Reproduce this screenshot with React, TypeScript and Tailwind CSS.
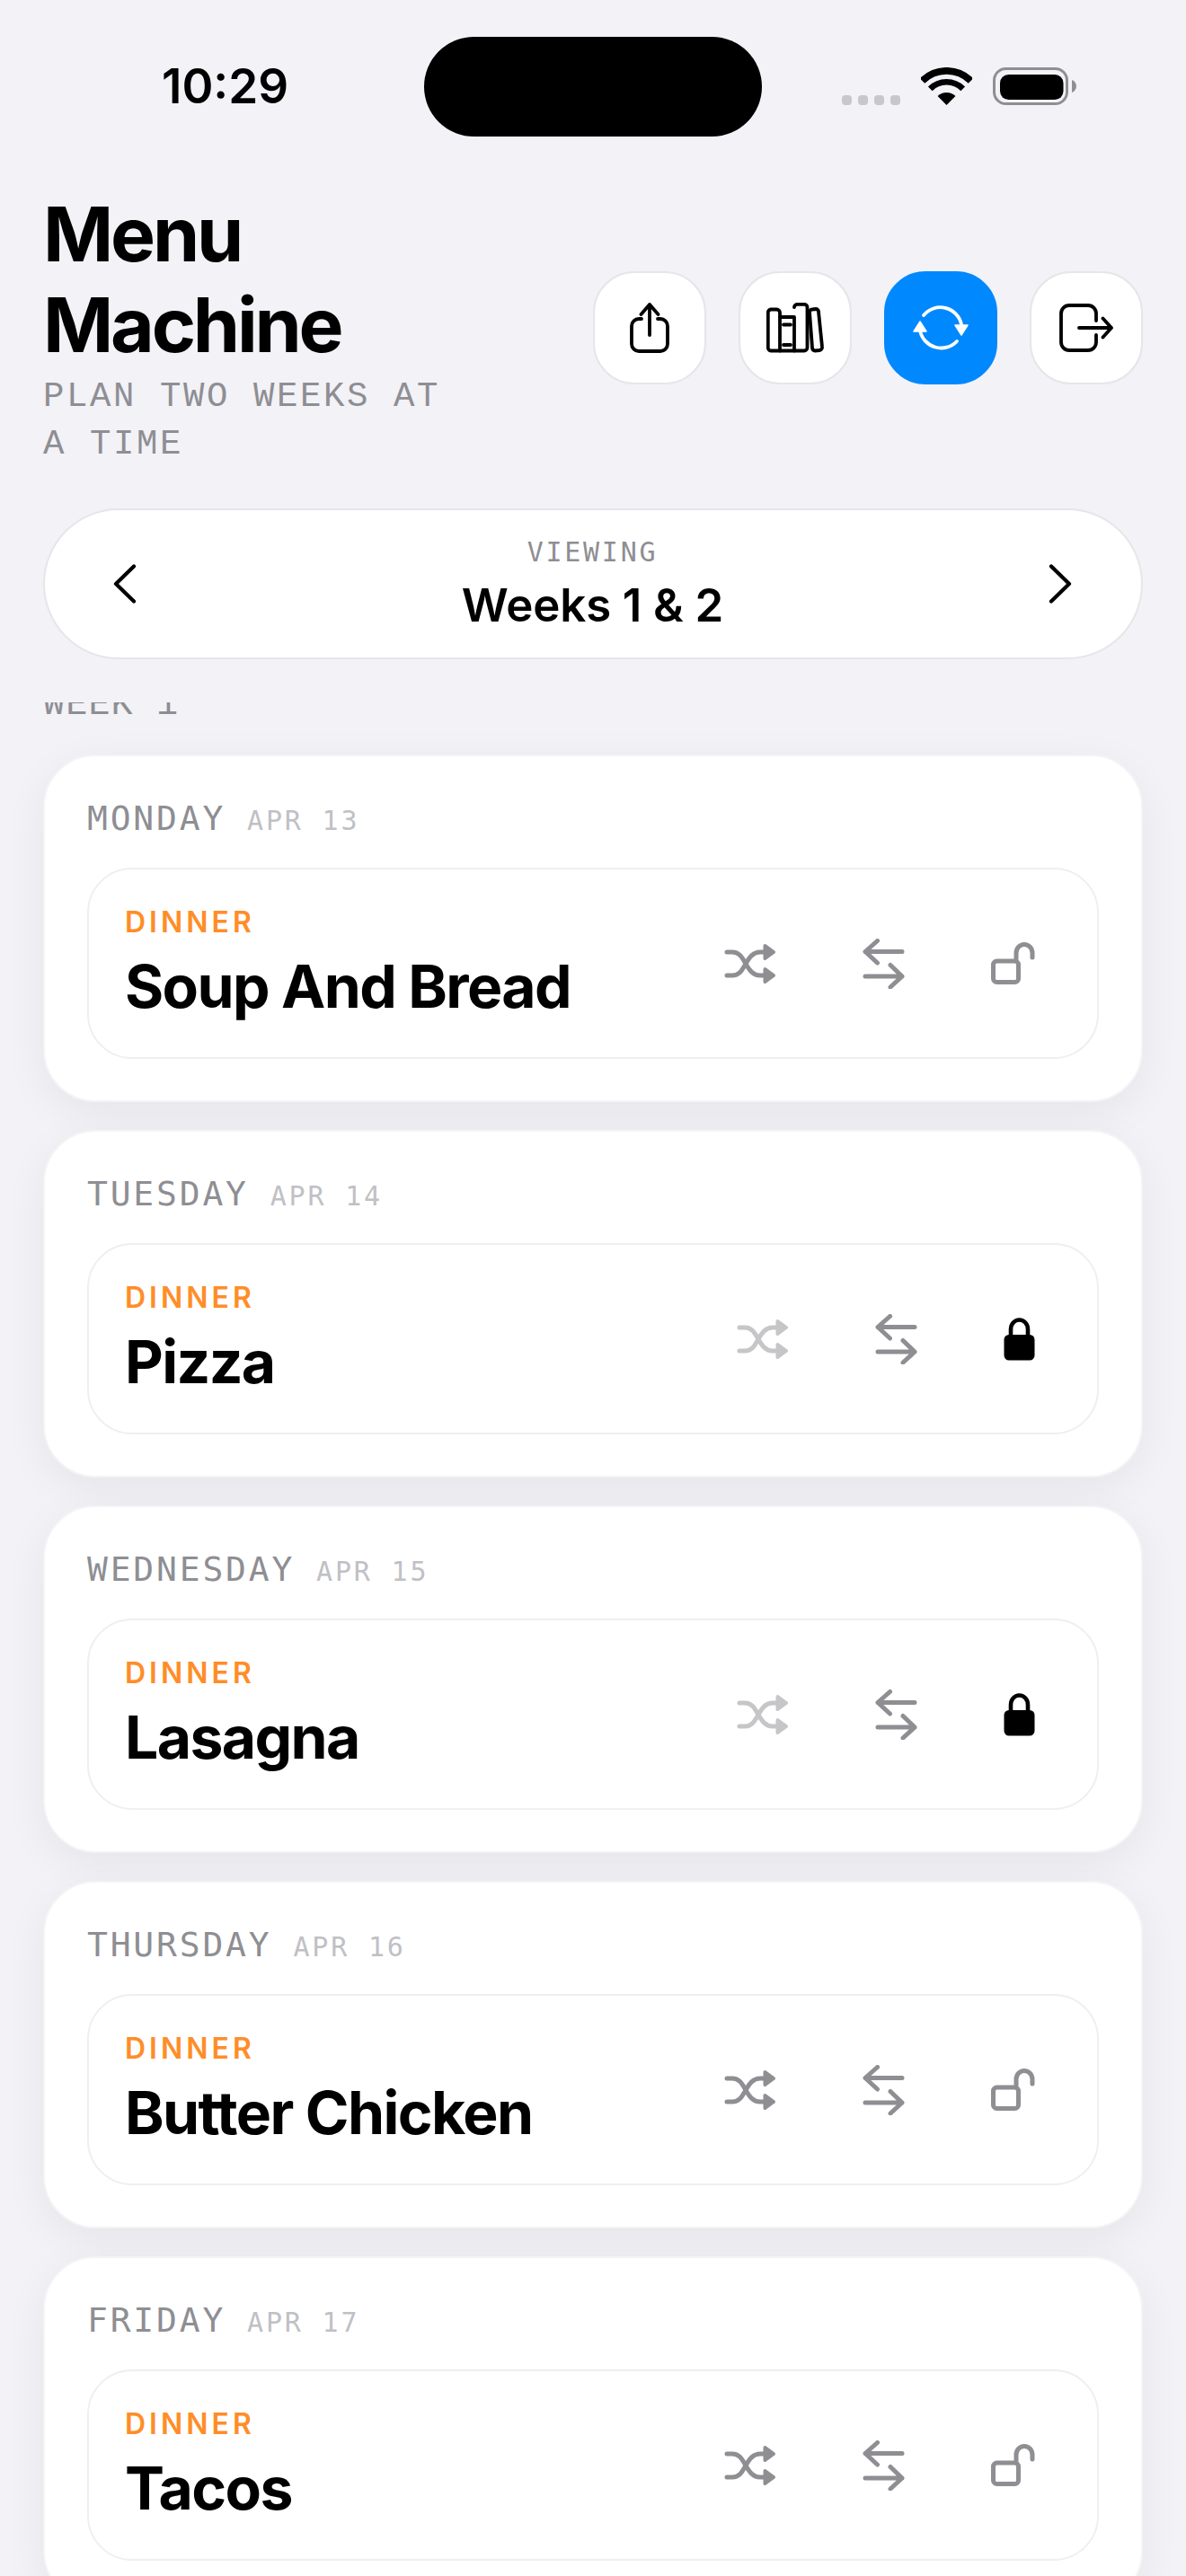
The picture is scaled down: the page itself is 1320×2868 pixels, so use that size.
import React from "react";

const SANS = "font-['Inter','Liberation_Sans',sans-serif]";
const MONO = "font-['Liberation_Mono','DejaVu_Sans_Mono',monospace]";
const MONO_HEAVY = "font-['DejaVu_Sans_Mono','Liberation_Mono',monospace]";

function Wifi() {
  return (
    <svg width="57" height="42" viewBox="0 0 57 42" className="block">
      <path d="M1.500 15 A38.200 38.200 0 0 1 55.500 15" fill="none" stroke="#000" strokeWidth="7.700" />
      <path d="M10.300 23.800 A25.700 25.700 0 0 1 46.700 23.800" fill="none" stroke="#000" strokeWidth="6.600" />
      <path d="M28.500 42 L18.600 32.100 A14 14 0 0 1 38.400 32.100 Z" fill="#000" />
    </svg>
  );
}

function Battery() {
  return (
    <svg width="93" height="42" viewBox="0 0 93 42" className="block">
      <rect x="1.500" y="1.500" width="81" height="39" rx="13" fill="none" stroke="#8e8e93" strokeWidth="3" />
      <rect x="8" y="8" width="70.500" height="28" rx="9.500" fill="#000" />
      <path d="M88 14 C91 15 93 18 93 21 C93 24 91 27 88 28 Z" fill="#8e8e93" />
    </svg>
  );
}

function ShareIcon() {
  return (
    <svg width="44" height="56" viewBox="0 0 44 56" fill="none" stroke="#000" strokeWidth="3.800" strokeLinecap="round" strokeLinejoin="round">
      <path d="M13 18 H10 A8 8 0 0 0 2 26 V46 A8 8 0 0 0 10 54 H34 A8 8 0 0 0 42 46 V26 A8 8 0 0 0 34 18 H31" />
      <path d="M22 36 V2 M12.500 13 L22 2 L31.500 13" />
    </svg>
  );
}

function BooksIcon() {
  return (
    <svg width="64" height="56" viewBox="0 0 64 56" fill="none" stroke="#000" strokeWidth="3.800" strokeLinecap="round" strokeLinejoin="round">
      <path d="M15 53.500 H5 A3.500 3.500 0 0 1 1.800 50 V11 A3.500 3.500 0 0 1 5 7.500 H11.500 A3.500 3.500 0 0 1 15 11 Z" />
      <path d="M15 16 H31 V53.500 H15" />
      <path d="M31 5 A3.500 3.500 0 0 1 34.500 1.800 H42 A3.500 3.500 0 0 1 45.500 5 V50 A3.500 3.500 0 0 1 42 53.500 H31" />
      <path d="M48 10.500 A3 3 0 0 1 51 7.500 L55 7 A3 3 0 0 1 58 10 L62 49 A3.500 3.500 0 0 1 59 53 L54 53.500 A3.500 3.500 0 0 1 51 50 Z" />
      <path d="M19 24.500 H27 M19 47 H27" />
    </svg>
  );
}

function RefreshIcon() {
  return (
    <svg width="62" height="52" viewBox="0 0 62 52" fill="none">
      <path d="M12 12 A24 24 0 0 1 54 22" stroke="#fff" strokeWidth="3.800" strokeLinecap="round" />
      <path d="M49 41 A24 24 0 0 1 8 29" stroke="#fff" strokeWidth="3.800" strokeLinecap="round" />
      <path d="M47 23 H61 L54 34 Z" fill="#fff" stroke="#fff" strokeWidth="1.500" strokeLinejoin="round" />
      <path d="M1 30 H15 L8 19 Z" fill="#fff" stroke="#fff" strokeWidth="1.500" strokeLinejoin="round" />
    </svg>
  );
}

function ExitIcon() {
  return (
    <svg width="60" height="54" viewBox="0 0 60 54" fill="none" stroke="#000" strokeWidth="3.800" strokeLinecap="round" strokeLinejoin="round">
      <path d="M41 19 V11 A9 9 0 0 0 32 2 H11 A9 9 0 0 0 2 11 V43 A9 9 0 0 0 11 52 H32 A9 9 0 0 0 41 43 V35" />
      <path d="M22 27 H58 M48.500 16.500 L58 27 L48.500 37.500" />
    </svg>
  );
}

function Chevron({ flip }: { flip?: boolean }) {
  return (
    <svg width="26" height="44" viewBox="0 0 26 44" fill="none" stroke="#000" strokeWidth="4.200" strokeLinecap="round" strokeLinejoin="round" className={flip ? "-scale-x-100" : ""}>
      <path d="M3 2.500 L23 22 L3 41.500" />
    </svg>
  );
}

function ShuffleIcon({ faded }: { faded?: boolean }) {
  return (
    <svg width="58" height="46" viewBox="0 0 58 46" fill="none" stroke="#8e8e93" strokeWidth="5" strokeLinecap="round" strokeLinejoin="round" className={faded ? "opacity-50" : ""}>
      <path d="M3 10 H9 C17 10 20 16 24 23 C28 30 32 36 40 36 H46" />
      <path d="M3 36 H9 C17 36 20 30 24 23 C28 16 32 10 40 10 H46" />
      <path d="M45.500 3 L55 10 L45.500 17 Z" fill="#8e8e93" strokeWidth="4" />
      <path d="M45.500 29 L55 36 L45.500 43 Z" fill="#8e8e93" strokeWidth="4" />
    </svg>
  );
}

function SwapIcon() {
  return (
    <svg width="47" height="56" viewBox="0 0 47 56" fill="none" stroke="#8e8e93" strokeWidth="5" strokeLinecap="round" strokeLinejoin="round">
      <path d="M44 14.500 H3 M16.500 2.500 L3 14.500 L16.500 27" />
      <path d="M3 42 H44 M31 29.500 L44 42 L31 54" />
    </svg>
  );
}

function LockOpenIcon() {
  return (
    <svg width="49" height="47" viewBox="0 0 49 47" fill="none" stroke="#8e8e93" strokeWidth="5" strokeLinecap="round" strokeLinejoin="round">
      <rect x="2.500" y="21" width="28" height="23.500" rx="4" />
      <path d="M28 19 V12 A9 9.500 0 0 1 46 12 V17" />
    </svg>
  );
}

function LockIcon() {
  return (
    <svg width="35" height="48" viewBox="0 0 35 48">
      <path d="M8 22 V13 A9.500 10.500 0 0 1 27 13 V22" fill="none" stroke="#000" strokeWidth="4.600" />
      <rect x="0.500" y="19" width="34" height="28.500" rx="5.500" fill="#000" />
    </svg>
  );
}

function HeaderButton({ active, children }: { active?: boolean; children: React.ReactNode }) {
  return (
    <div className={`flex h-[126px] w-[126px] items-center justify-center rounded-[46px] border-2 ${active ? "border-[#0088ff] bg-[#0088ff]" : "border-[#e6e6ea] bg-white"}`}>
      {children}
    </div>
  );
}

const days = [
  { day: "MONDAY", date: "APR 13", meal: "Soup And Bread", locked: false },
  { day: "TUESDAY", date: "APR 14", meal: "Pizza", locked: true },
  { day: "WEDNESDAY", date: "APR 15", meal: "Lasagna", locked: true },
  { day: "THURSDAY", date: "APR 16", meal: "Butter Chicken", locked: false },
  { day: "FRIDAY", date: "APR 17", meal: "Tacos", locked: false },
];

function DayCard({ day, date, meal, locked }: (typeof days)[number]) {
  return (
    <div className="shrink-0 rounded-[58px] border-2 border-[#f4f4f7] bg-white px-[47px] pb-[46px] pt-[46px] shadow-[0_12px_48px_rgba(0,0,0,0.06)]">
      <div className={`flex h-[46px] items-baseline gap-[24px] leading-[46px] ${MONO_HEAVY}`}>
        <span className="text-[38px] tracking-[2.8px] text-[#8e8e93]">{day}</span>
        <span className="text-[30px] tracking-[2.8px] text-[#c0c0c5]">{date}</span>
      </div>
      <div className="mt-[32px] flex h-[213px] items-center justify-between rounded-[50px] border-2 border-[#efeff2] pl-[40px] pr-[69px]">
        <div className={SANS}>
          <div className="text-[32px] font-semibold leading-[40px] tracking-[4px] text-[#ff8d28]">DINNER</div>
          <div className="mt-[11px] text-[66px] font-bold leading-[80px] tracking-[-1.6px] text-black">{meal}</div>
        </div>
        <div className="flex items-center gap-[96px]">
          <ShuffleIcon faded={locked} />
          <SwapIcon />
          {locked ? <LockIcon /> : <LockOpenIcon />}
        </div>
      </div>
    </div>
  );
}

export default function App() {
  return (
    <div className={`flex h-[2868px] w-[1320px] flex-col overflow-hidden bg-[#f2f2f7] ${SANS}`}>
      <div className="flex h-[210px] shrink-0 items-start pl-[180px] pr-[122px]">
        <div className="mt-[64px] w-[292px] text-[53px] font-semibold leading-[64px] text-black">10:29</div>
        <div className="mt-[41px] h-[111px] w-[376px] rounded-[56px] bg-black" />
        <div className="ml-[89px] mt-[106px] flex gap-[7px]">
          <div className="h-[11px] w-[11px] rounded-[4px] bg-[#c7c7cc]" />
          <div className="h-[11px] w-[11px] rounded-[4px] bg-[#c7c7cc]" />
          <div className="h-[11px] w-[11px] rounded-[4px] bg-[#c7c7cc]" />
          <div className="h-[11px] w-[11px] rounded-[4px] bg-[#c7c7cc]" />
        </div>
        <div className="ml-[23px] mt-[75px] flex gap-[23px]">
          <Wifi />
          <Battery />
        </div>
      </div>

      <div className="flex shrink-0 items-center justify-between px-12">
        <div>
          <h1 className="text-[84px] font-bold leading-[101px] tracking-[-3.2px] text-black">
            Menu
            <br />
            Machine
          </h1>
          <div className={`mt-[4px] w-[480px] text-[39px] leading-[53px] tracking-[2.6px] text-[#8e8e93] ${MONO}`}>PLAN TWO WEEKS AT A TIME</div>
        </div>
        <div className="mb-[3px] flex gap-[36px]">
          <HeaderButton><ShareIcon /></HeaderButton>
          <HeaderButton><BooksIcon /></HeaderButton>
          <HeaderButton active><RefreshIcon /></HeaderButton>
          <HeaderButton><ExitIcon /></HeaderButton>
        </div>
      </div>

      <div className="shrink-0 px-12 pt-[44px]">
        <div className="flex h-[168px] items-center justify-between rounded-full border-2 border-[#e6e6ea] bg-white pl-[76px] pr-[77px]">
          <Chevron flip />
          <div className="text-center">
            <div className={`text-[30px] leading-[40px] tracking-[2.7px] text-[#8e8e93] ${MONO_HEAVY}`}>VIEWING</div>
            <div className="mt-[8px] text-[51px] font-semibold leading-[62px] tracking-[-0.1px] text-black">Weeks 1 &amp; 2</div>
          </div>
          <Chevron />
        </div>
      </div>

      <div className="mt-[48px] min-h-0 flex-1 overflow-hidden px-12">
        <div className="-mt-[24px] flex flex-col gap-[31px]">
          <div className={`-mb-[2px] text-[40px] leading-[53px] tracking-[1.2px] text-[#8e8e93] ${MONO}`}>WEEK 1</div>
          {days.map((d) => (
            <DayCard key={d.day} {...d} />
          ))}
        </div>
      </div>
    </div>
  );
}
